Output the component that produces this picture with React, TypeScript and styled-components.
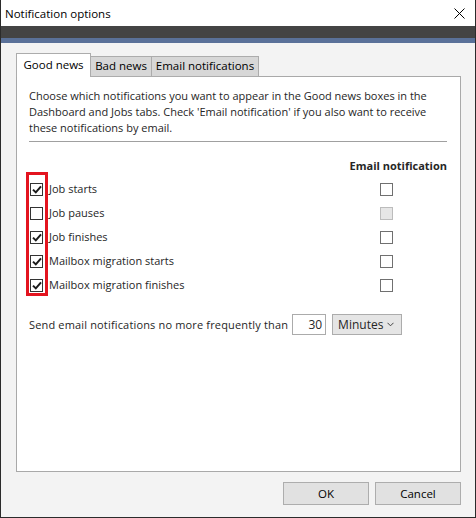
import React from 'react';
import styled, { createGlobalStyle } from 'styled-components';

const Global = createGlobalStyle`
  html, body {
    margin: 0;
    padding: 0;
    background: #ffffff;
  }
  body {
    font-family: 'Open Sans', 'Noto Sans', sans-serif;
    font-size: 11px;
    color: #262626;
  }
`;

const Window = styled.div`
  box-sizing: border-box;
  width: 476px;
  height: 518px;
  border: 1px solid #2b2b2b;
  border-top: none;
  display: flex;
  flex-direction: column;
  background: #f3f3f3;
`;

const TitleBar = styled.div`
  height: 26px;
  display: flex;
  align-items: center;
  justify-content: space-between;
  padding: 0 10px 0 4px;
  background: #ffffff;
  color: #000000;
  font-size: 11.5px;
`;

const CloseIcon = styled.svg`
  width: 11px;
  height: 11px;
`;

const DarkBand = styled.div`
  height: 12px;
  background: #444444;
`;

const BlueBand = styled.div`
  height: 5px;
  background: #5a7199;
`;

const Body = styled.div`
  flex: 1;
  display: flex;
  flex-direction: column;
  padding: 11px 14px 0 15px;
`;

const Tabs = styled.div`
  display: flex;
  align-items: flex-end;
  height: 23px;
  position: relative;
  z-index: 1;
  margin-bottom: -1px;
`;

const Tab = styled.div<{ $active?: boolean; $width: number }>`
  box-sizing: border-box;
  width: ${({ $width }) => $width}px;
  height: ${({ $active }) => ($active ? '24px' : '21px')};
  padding-top: ${({ $active }) => ($active ? '3px' : '1px')};
  text-align: center;
  border: 1px solid #acacac;
  border-bottom: ${({ $active }) => ($active ? 'none' : '1px solid #acacac')};
  margin-left: ${({ $active }) => ($active ? '0' : '-1px')};
  background: ${({ $active }) => ($active ? '#ffffff' : '#d7d7d7')};
  color: #000000;
  font-size: 11.5px;
  white-space: nowrap;
`;

const Panel = styled.div`
  box-sizing: border-box;
  height: 396px;
  background: #ffffff;
  border: 1px solid #a9a9a9;
  padding: 11px 13px 0 12px;
  display: flex;
  flex-direction: column;
`;

const Intro = styled.p`
  margin: 0;
  line-height: 16px;
  padding-bottom: 5px;
  border-bottom: 1px solid #a0a0a0;
`;

const ColumnHeader = styled.div`
  margin-top: 16px;
  text-align: right;
  font-weight: 700;
  line-height: 16px;
`;

const List = styled.div`
  position: relative;
  margin-top: 7px;
  display: flex;
  flex-direction: column;
  gap: 11px;
`;

const Highlight = styled.div`
  position: absolute;
  left: -3px;
  top: -9px;
  width: 22px;
  height: 124px;
  box-sizing: border-box;
  border: 3px solid #e3141f;
  pointer-events: none;
`;

const Row = styled.div`
  display: grid;
  grid-template-columns: 1fr 67px;
  align-items: center;
  height: 13px;
`;

const Label = styled.label`
  display: flex;
  align-items: center;
  gap: 6px;
  padding-left: 1px;
  line-height: 16px;
`;

const Box = styled.span<{ $disabled?: boolean; $light?: boolean }>`
  box-sizing: border-box;
  width: 13px;
  height: 13px;
  display: inline-flex;
  align-items: center;
  justify-content: center;
  border: 1px solid
    ${({ $disabled, $light }) => ($disabled ? '#bcbcbc' : $light ? '#707070' : '#333333')};
  background: ${({ $disabled }) => ($disabled ? '#e6e6e6' : '#ffffff')};
`;

const Tick = styled.svg`
  width: 10px;
  height: 9px;
`;

const SendRow = styled.div`
  margin-top: 24px;
  display: flex;
  align-items: center;
  gap: 4px;
`;

const SendText = styled.span`
  letter-spacing: 0.16px;
`;

const NumberBox = styled.div`
  box-sizing: border-box;
  width: 34px;
  height: 21px;
  border: 1px solid #ababab;
  background: #ffffff;
  text-align: right;
  padding-right: 3px;
  line-height: 19px;
  font-size: 12px;
`;

const Select = styled.div`
  box-sizing: border-box;
  width: 70px;
  height: 21px;
  margin-left: 2px;
  border: 1px solid #acacac;
  background: #e5e5e5;
  display: flex;
  align-items: center;
  justify-content: space-between;
  padding: 0 7px 0 5px;
  font-size: 12px;
`;

const Footer = styled.div`
  display: flex;
  justify-content: flex-end;
  gap: 6px;
  padding-top: 10px;
`;

const Button = styled.button`
  box-sizing: border-box;
  width: 86px;
  height: 23px;
  border: 1px solid #adadad;
  background: #e1e1e1;
  font-family: inherit;
  font-size: 11.5px;
  color: #000000;
  padding: 0;
`;

const tabs = [
  { label: 'Good news', width: 75, active: true },
  { label: 'Bad news', width: 62, active: false },
  { label: 'Email notifications', width: 108, active: false },
];

const items = [
  { label: 'Job starts', on: true, disabledEmail: false },
  { label: 'Job pauses', on: false, disabledEmail: true },
  { label: 'Job finishes', on: true, disabledEmail: false },
  { label: 'Mailbox migration starts', on: true, disabledEmail: false },
  { label: 'Mailbox migration finishes', on: true, disabledEmail: false },
];

function Check({ on, disabled, light }: { on?: boolean; disabled?: boolean; light?: boolean }) {
  return (
    <Box $disabled={disabled} $light={light}>
      {on && (
        <Tick viewBox="0 0 10 9">
          <path d="M1 4.6 L3.8 7.4 L9 1.4" fill="none" stroke="#1a1a1a" strokeWidth="2" />
        </Tick>
      )}
    </Box>
  );
}

export default function App() {
  return (
    <>
      <Global />
      <Window>
        <TitleBar>
          <span>Notification options</span>
          <CloseIcon viewBox="0 0 11 11">
            <path d="M0.5 0.5 L10.5 10.5 M10.5 0.5 L0.5 10.5" stroke="#000" strokeWidth="1" />
          </CloseIcon>
        </TitleBar>
        <DarkBand />
        <BlueBand />
        <Body>
          <Tabs>
            {tabs.map((t) => (
              <Tab key={t.label} $active={t.active} $width={t.width}>
                {t.label}
              </Tab>
            ))}
          </Tabs>
          <Panel>
            <Intro>
              Choose which notifications you want to appear in the Good news boxes in the
              Dashboard and Jobs tabs. Check 'Email notification' if you also want to receive
              these notifications by email.
            </Intro>
            <ColumnHeader>Email notification</ColumnHeader>
            <List>
              <Highlight />
              {items.map((it) => (
                <Row key={it.label}>
                  <Label>
                    <Check on={it.on} />
                    {it.label}
                  </Label>
                  <Check light disabled={it.disabledEmail} />
                </Row>
              ))}
            </List>
            <SendRow>
              <SendText>Send email notifications no more frequently than</SendText>
              <NumberBox>30</NumberBox>
              <Select>
                <span>Minutes</span>
                <svg width="7" height="5" viewBox="0 0 7 5">
                  <path d="M0.5 0.8 L3.5 3.8 L6.5 0.8" fill="none" stroke="#444" strokeWidth="1" />
                </svg>
              </Select>
            </SendRow>
          </Panel>
          <Footer>
            <Button>OK</Button>
            <Button>Cancel</Button>
          </Footer>
        </Body>
      </Window>
    </>
  );
}
